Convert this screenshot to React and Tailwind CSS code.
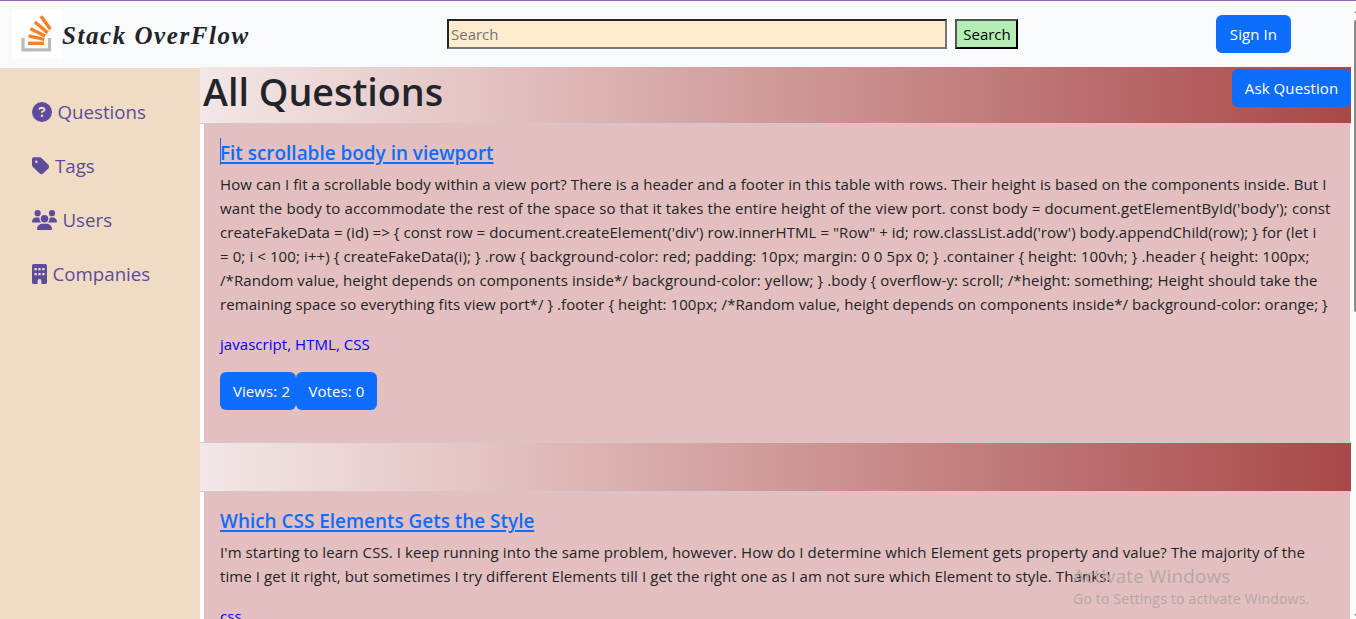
import { FaCircleQuestion, FaTag, FaUsers } from "react-icons/fa6";

function Logo() {
  return (
    <svg className="h-[50px] w-[50px] bg-white" viewBox="0 0 50 50" fill="none">
      <path d="M11 29V40.8H37.5V29" stroke="#bcbbbb" strokeWidth="3.2" />
      <g stroke="#f58025" strokeWidth="3.4">
        <path d="M16 34.3H32" />
        <path d="M16.5 26.8L32.2 30.4" />
        <path d="M18.4 19.7L33.2 27.1" />
        <path d="M23 13L35.6 23.8" />
        <path d="M29 7.2L38.4 20.2" />
      </g>
    </svg>
  );
}

function Building({ className }) {
  return (
    <svg className={className} viewBox="0 0 384 512" fill="currentColor" fillRule="evenodd">
      <path d="M48 0A48 48 0 0 0 0 48V464A48 48 0 0 0 48 512H144V432A48 48 0 0 1 240 432V512H336A48 48 0 0 0 384 464V48A48 48 0 0 0 336 0ZM64 102H122V160H64ZM163 102H221V160H163ZM262 102H320V160H262ZM64 230H122V288H64ZM163 230H221V288H163ZM262 230H320V288H262Z" />
    </svg>
  );
}

const menu = [
  { label: "Questions", Icon: FaCircleQuestion, w: "w-5" },
  { label: "Tags", Icon: FaTag, w: "w-[17.5px]" },
  { label: "Users", Icon: FaUsers, w: "w-[25px]" },
  { label: "Companies", Icon: Building, w: "w-[15px]" },
];

const questions = [
  {
    title: "Fit scrollable body in viewport",
    lines: [
      ["How can I fit a scrollable body within a view port? There is a header and a footer in this table with rows. Their height is based on the components inside. But I", "tracking-[0.085px]"],
      ["want the body to accommodate the rest of the space so that it takes the entire height of the view port. const body = document.getElementById('body'); const", "tracking-[0.125px]"],
      ["createFakeData = (id) => { const row = document.createElement('div') row.innerHTML = \"Row\" + id; row.classList.add('row') body.appendChild(row); } for (let i", "tracking-[0.064px]"],
      ["= 0; i < 100; i++) { createFakeData(i); } .row { background-color: red; padding: 10px; margin: 0 0 5px 0; } .container { height: 100vh; } .header { height: 100px;", "tracking-[0.1px]"],
      ["/*Random value, height depends on components inside*/ background-color: yellow; } .body { overflow-y: scroll; /*height: something; Height should take the", "tracking-[0.092px]"],
      ["remaining space so everything fits view port*/ } .footer { height: 100px; /*Random value, height depends on components inside*/ background-color: orange; }", "tracking-[0.065px]"],
    ],
    tags: "javascript, HTML, CSS",
    views: 2,
    votes: 0,
  },
  {
    title: "Which CSS Elements Gets the Style",
    lines: [
      ["I'm starting to learn CSS. I keep running into the same problem, however. How do I determine which Element gets property and value? The majority of the", "tracking-[0.09px]"],
      ["time I get it right, but sometimes I try different Elements till I get the right one as I am not sure which Element to style. Thanks!", "tracking-[0.095px]"],
    ],
    tags: "css",
  },
];

function Button({ className, children }) {
  return (
    <button className={`h-[38px] rounded-md bg-[#0d6efd] text-[15px] leading-6 tracking-[0.1px] whitespace-nowrap text-white ${className}`}>
      {children}
    </button>
  );
}

function Question({ q, caret }) {
  return (
    <article className="h-[320px] shrink-0 border-y border-[#cccaca] bg-white pr-px pl-1">
      <div className="h-full bg-[#e3bfbf] pt-[17px] pl-4">
        <h2 className="relative text-[18.93px] leading-6 font-[550] whitespace-nowrap text-[#0d6efd] underline decoration-2 underline-offset-2">
          {caret && <span className="absolute -top-[3px] left-0 h-[27px] w-px bg-[#0d6efd]" />}
          {q.title}
        </h2>
        <div className="mt-[7px] mb-4 text-[15px] leading-6 whitespace-nowrap">
          {q.lines.map(([line, tracking]) => (
            <p key={line} className={tracking}>{line}</p>
          ))}
        </div>
        <p className="text-[15px] leading-6 tracking-[0.05px] text-[#0000ff]">{q.tags}</p>
        {q.views !== undefined && (
          <div className="mt-4 flex">
            <Button className="w-[76px] pl-[7px]">Views: {q.views}</Button>
            <Button className="w-[81px]">Votes: {q.votes}</Button>
          </div>
        )}
      </div>
    </article>
  );
}

export default function App() {
  return (
    <div className="relative flex h-[619px] w-[1356px] overflow-hidden bg-white font-['Open_Sans',sans-serif] text-[#212529]">
      <div className="flex w-[1351px] flex-col">
        <header className="flex h-[67px] shrink-0 items-start border-t border-[#9068b8] bg-[#f8fafc]">
          <div className="mt-2 ml-3 flex w-[435px] items-center">
            <Logo />
            <span className="pt-1 font-['Liberation_Serif',serif] text-[25px] font-bold tracking-[1.55px] whitespace-nowrap italic">
              Stack OverFlow
            </span>
          </div>
          <input
            placeholder="Search"
            className="mt-[18px] h-[30px] w-[500px] border-2 border-t-[#212529] border-r-[#767676] border-b-[#767676] border-l-[#212529] bg-[#ffebcd] px-0.5 text-[15px] placeholder:text-[#757575]"
          />
          <button className="mt-[18px] ml-2 h-[30px] w-[63px] border-2 border-t-[#555] border-r-black border-b-black border-l-[#555] bg-[#b4eeb4] pl-px text-[15px] leading-6 text-black">
            Search
          </button>
          <Button className="mt-3.5 ml-[198px] w-[75px]">Sign In</Button>
        </header>
        <div className="flex h-[552px]">
          <nav className="mt-px flex w-[200px] shrink-0 flex-col gap-6 bg-[#f0dcc4] pt-[29px] pl-8 text-[18.7px] leading-[30px] text-[#5e4b9c]">
            {menu.map(({ label, Icon, w }) => (
              <a key={label} className="flex items-center">
                <Icon className={`mr-[5.5px] h-5 shrink-0 ${w}`} />
                {label}
              </a>
            ))}
          </nav>
          <main className="flex flex-1 flex-col overflow-hidden bg-[linear-gradient(to_right,#f3e7e7,#e2bfbf_27%,#a84848)]">
            <div className="flex h-14 shrink-0 items-start justify-between pl-[3px]">
              <h1 className="pt-px text-[37.7px] leading-[48px] font-[550]">All Questions</h1>
              <Button className="mt-0.5 w-[119px]">Ask Question</Button>
            </div>
            <Question q={questions[0]} caret />
            <div className="h-12 shrink-0" />
            <Question q={questions[1]} />
          </main>
        </div>
      </div>
      <div className="flex w-[5px] flex-col items-end border-t border-[#9068b8] bg-[#fcfcfc]">
        <svg className="mt-2.5 h-0.5 w-0.5" viewBox="0 0 2 2" fill="#777">
          <path d="M2 0V2H0Z" />
        </svg>
        <div className="mt-[7px] h-[292px] w-0.5 rounded-l bg-[#8b8b8b]" />
        <svg className="mt-[302px] h-0.5 w-0.5" viewBox="0 0 2 2" fill="#777">
          <path d="M0 0H2V2Z" />
        </svg>
      </div>
      <div className="absolute top-[564px] left-[1073px] text-[#b8a6a6]">
        <p className="text-[18.8px] leading-6 tracking-[0.2px] whitespace-nowrap">Activate Windows</p>
        <p className="text-[14px] leading-[21px] tracking-[0.2px] whitespace-nowrap">Go to Settings to activate Windows.</p>
      </div>
    </div>
  );
}
